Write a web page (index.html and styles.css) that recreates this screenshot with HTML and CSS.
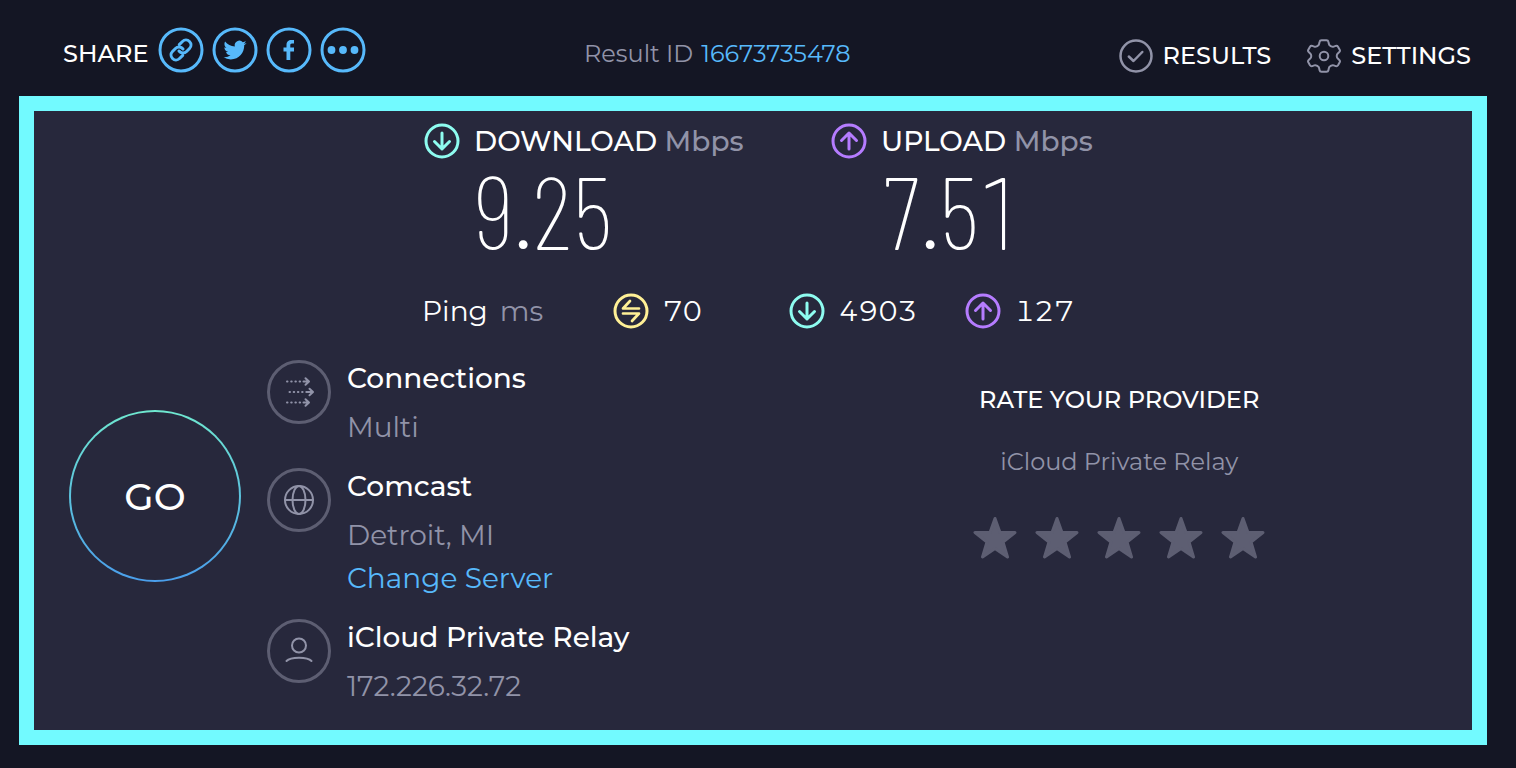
FILE: index.html
```html
<!DOCTYPE html>
<html lang="en">
<head>
<meta charset="utf-8">
<meta name="viewport" content="width=device-width, initial-scale=1">
<title>Speed test result</title>
<link rel="stylesheet" href="styles.css">
</head>
<body>
<svg class="sprite" aria-hidden="true">
  <symbol id="down" viewBox="0 0 36 36"><circle cx="18" cy="18" r="16"/><path d="M18 10v16M10.500 18.500 18 26l7.500-7.500"/></symbol>
  <symbol id="up" viewBox="0 0 36 36"><circle cx="18" cy="18" r="16"/><path d="M18 26V10M10.500 17.500 18 10l7.500 7.500"/></symbol>
  <symbol id="star" viewBox="0 0 44 44"><path d="M22 2.500 27 16.500H42L30 26 34.500 41 22 32.500 9.500 41 14 26 2 16.500H17Z"/></symbol>
</svg>
<header class="topbar">
  <div class="share">
    <span class="share-label">SHARE</span>
    <button class="share-button" aria-label="Copy link"><svg viewBox="0 0 46 46"><circle cx="23" cy="23" r="21"/><g transform="translate(11 11)"><path d="M10 13a5 5 0 0 0 7.540.540l3-3a5 5 0 0 0-7.070-7.070l-3.200 3.200"/><path d="M14 11a5 5 0 0 0-7.540-.540l-3 3a5 5 0 0 0 7.070 7.070l3.200-3.200"/></g></svg></button>
    <button class="share-button" aria-label="Share on Twitter"><svg viewBox="0 0 46 46"><circle cx="23" cy="23" r="21"/><path class="solid" transform="translate(11.500 11.500) scale(.96)" d="M23.950 4.570a10 10 0 0 1-2.820.770 4.960 4.960 0 0 0 2.160-2.720c-.950.550-2 .960-3.130 1.190a4.920 4.920 0 0 0-8.380 4.480C7.690 8.100 4.070 6.130 1.640 3.160a4.820 4.820 0 0 0-.670 2.480c0 1.710.870 3.210 2.190 4.100a4.900 4.900 0 0 1-2.230-.610v.060a4.920 4.920 0 0 0 3.950 4.830 5 5 0 0 1-2.210.080 4.940 4.940 0 0 0 4.600 3.420A9.870 9.870 0 0 1 0 19.540a14 14 0 0 0 7.550 2.210c9.050 0 14-7.500 14-13.980 0-.210 0-.420-.020-.630a9.940 9.940 0 0 0 2.460-2.550z"/></svg></button>
    <button class="share-button" aria-label="Share on Facebook"><svg viewBox="0 0 46 46"><circle cx="23" cy="23" r="21"/><path class="solid" d="M20.500 33V24.500H17.500V20.500H20.500V18c0-3.500 2-5 4.800-5H28v3.500h-2c-1.300 0-1.700.700-1.700 1.800v2.200H28V24.500H24.300V33Z"/></svg></button>
    <button class="share-button" aria-label="More ways to share"><svg viewBox="0 0 46 46"><circle cx="23" cy="23" r="21"/><g class="solid"><circle cx="11.500" cy="23" r="3.900"/><circle cx="23" cy="23" r="3.900"/><circle cx="34.500" cy="23" r="3.900"/></g></svg></button>
  </div>
  <div class="result-id">Result ID <a href="#result">16673735478</a></div>
  <nav class="nav">
    <a href="#results"><svg viewBox="0 0 34 34"><circle cx="17" cy="17" r="15.500"/><path stroke-width="2.500" d="m9.800 17.500 4.700 4.500 8.800-9"/></svg>RESULTS</a>
    <a href="#settings"><svg class="gear" viewBox="0 0 34 34"><path d="M14.500 1.200h5q1.600 0 1.900 1.600l.5 2.200q.3 1.300 1.500 1.900l.9.500q1.200.6 2.400.2l2-.7q1.500-.4 2.300.9l1.700 3q.7 1.300-.4 2.300l-1.500 1.400q-1 .9-1 2v1q0 1.200 1 2l1.500 1.400q1.100 1 .4 2.300l-1.700 3q-.8 1.300-2.300.9l-2-.7q-1.200-.4-2.400.2l-.9.500q-1.200.6-1.500 1.900l-.5 2.200q-.3 1.600-1.900 1.600h-5q-1.600 0-1.900-1.600l-.5-2.200q-.3-1.300-1.500-1.900l-.9-.5q-1.200-.6-2.400-.2l-2 .7q-1.500.4-2.300-.9l-1.700-3q-.7-1.300.4-2.300l1.500-1.400q1-.8 1-2v-1q0-1.100-1-2l-1.500-1.400q-1.100-1-.4-2.300l1.700-3q.8-1.300 2.300-.9l2 .7q1.200.4 2.400-.2l.9-.5q1.200-.6 1.500-1.900l.5-2.200q.3-1.600 1.900-1.600Z"/><circle cx="17" cy="17" r="4.300"/></svg>SETTINGS</a>
  </nav>
</header>
<main class="panel" id="result">
  <section class="speeds">
    <div class="speed">
      <svg class="ring teal"><use href="#down"/></svg>
      <h2>DOWNLOAD <span class="unit">Mbps</span></h2>
      <p class="speed-value">9.25</p>
    </div>
    <div class="speed">
      <svg class="ring purple"><use href="#up"/></svg>
      <h2>UPLOAD <span class="unit">Mbps</span></h2>
      <p class="speed-value">7.51</p>
    </div>
  </section>
  <section class="pings">
    <div class="ping-label">Ping <span class="muted">ms</span></div>
    <div class="ping"><svg class="ring yellow" viewBox="0 0 36 36"><circle cx="18" cy="18" r="16"/><path stroke-width="2.700" d="M26 15.500H10L17 8M10 20.500H26L19 28"/></svg>70</div>
    <div class="ping"><svg class="ring teal"><use href="#down"/></svg>4903</div>
    <div class="ping"><svg class="ring purple"><use href="#up"/></svg>127</div>
  </section>
  <section class="details">
    <button class="go">GO</button>
    <div class="hosts">
      <div class="host">
        <svg class="badge" viewBox="0 0 64 64"><circle class="outline" cx="32" cy="32" r="30.500"/><path stroke-dasharray=".5 3.700" d="M20 21.500H36M22.500 32H40M20 42.500H36"/><path d="M36.500 21.500h5M38.500 18.200l3.500 3.300-3.500 3.300M40.500 32h5M42.500 28.700l3.500 3.300-3.500 3.300M36.500 42.500h5M38.500 39.200l3.500 3.300-3.500 3.300"/></svg>
        <div><h3>Connections</h3><p>Multi</p></div>
      </div>
      <div class="host">
        <svg class="badge" viewBox="0 0 64 64"><circle class="outline" cx="32" cy="32" r="30.500"/><circle cx="32" cy="32" r="14"/><ellipse cx="32" cy="32" rx="6.500" ry="14"/><path d="M18 32H46"/></svg>
        <div><h3>Comcast</h3><p>Detroit, MI</p><a href="#servers">Change Server</a></div>
      </div>
      <div class="host">
        <svg class="badge" viewBox="0 0 64 64"><circle class="outline" cx="32" cy="32" r="30.500"/><circle cx="32" cy="26.500" r="7"/><path d="M19.500 42c4-4.500 21-4.500 25 0"/></svg>
        <div><h3>iCloud Private Relay</h3><p>172.226.32.72</p></div>
      </div>
    </div>
    <div class="rate">
      <h4>RATE YOUR PROVIDER</h4>
      <p>iCloud Private Relay</p>
      <div class="stars">
        <button aria-label="1 star"><svg><use href="#star"/></svg></button>
        <button aria-label="2 stars"><svg><use href="#star"/></svg></button>
        <button aria-label="3 stars"><svg><use href="#star"/></svg></button>
        <button aria-label="4 stars"><svg><use href="#star"/></svg></button>
        <button aria-label="5 stars"><svg><use href="#star"/></svg></button>
      </div>
    </div>
  </section>
</main>
</body>
</html>
```
FILE: styles.css
```css
* { box-sizing: border-box; }
body {
  margin: 0;
  min-height: 100vh;
  background: #141624;
  color: #fff;
  font-family: Montserrat, Inter, sans-serif;
  font-size: 28px;
  font-weight: 400;
}
h2, h3, h4, p { margin: 0; }
a { color: #57b9fb; text-decoration: none; }
button { border: 0; padding: 0; background: none; color: inherit; font: inherit; cursor: pointer; }
svg { display: block; flex: none; fill: none; stroke: currentColor; stroke-width: 3; stroke-linecap: round; stroke-linejoin: round; }
.solid { fill: currentColor; stroke: none; }
.sprite { position: absolute; width: 0; height: 0; }
.muted { color: #9193a8; }

.topbar {
  display: grid;
  grid-template-columns: 37% 1fr auto;
  align-items: center;
  height: 96px;
  padding: 4px 45px 0 63px;
  font-size: 24px;
}
.share { display: flex; align-items: center; gap: 8px; }
.share-label { margin: 6px 1px 0 0; font-weight: 500; }
.share-button { color: #57b9fb; }
.share-button svg { width: 46px; height: 46px; }
.result-id { color: #9193a8; padding-top: 6px; }
.result-id a { margin-left: 2px; }
.nav { display: flex; gap: 36px; padding-top: 11px; }
.nav a { display: flex; align-items: center; gap: 10px; color: #fff; font-weight: 500; }
.nav svg { width: 34px; height: 34px; color: #9193a8; stroke-width: 2.5; }
.nav .gear { stroke-width: 2; }

.panel {
  margin: 0 29px 23px 19px;
  border: 15px solid #72faff;
  padding: 12px 35px 22px;
  background: #27283c;
}
.speeds {
  display: grid;
  grid-template-columns: 407px 262px;
  justify-content: center;
  padding-left: 11px;
}
.speed { display: grid; grid-template-columns: 36px auto; column-gap: 14px; justify-content: start; align-items: center; }
.speed h2 { font-size: 28px; line-height: 36px; font-weight: 500; white-space: nowrap; }
.unit { color: #9193a8; }
.speed-value {
  grid-column: 2;
  margin-bottom: 6px;
  font-family: "Barlow Condensed", "Roboto Condensed", Lato, sans-serif;
  font-size: 102px;
  font-weight: 200;
  line-height: 100px;
  font-variant-numeric: tabular-nums;
}
.ring { width: 36px; height: 36px; }
.teal { color: #8efcf0; }
.purple { color: #b57cff; }
.yellow { color: #fff096; }
.pings {
  display: grid;
  grid-template-columns: 191px 176px 176px 125px;
  justify-content: center;
  align-items: center;
  margin-top: 28px;
  padding-left: 6px;
  line-height: 36px;
}
.ping { display: flex; align-items: center; gap: 14px; font-variant-numeric: tabular-nums; }
.ping-label { display: flex; gap: 12px; }

.details {
  display: grid;
  grid-template-columns: 172px 4fr 5fr;
  column-gap: 26px;
  align-items: start;
  margin-top: 31px;
}
.go {
  width: 172px;
  height: 172px;
  margin-top: 50px;
  border: 2px solid transparent;
  border-radius: 50%;
  background: linear-gradient(#27283c, #27283c) padding-box, linear-gradient(#6fe8d0, #4a9eeb) border-box;
  font-size: 38px;
  font-weight: 500;
}
.hosts { display: grid; gap: 19px; }
.host { display: grid; grid-template-columns: 64px auto; column-gap: 16px; justify-content: start; align-items: start; line-height: 43px; }
.host h3 { margin-bottom: 10px; font-size: 28px; line-height: 36px; font-weight: 500; }
.host p { color: #9193a8; }
.badge { width: 64px; height: 64px; color: #9193a8; stroke-width: 2; }
.outline { stroke: #5d5e72; stroke-width: 3; }
.rate { padding-top: 24px; text-align: center; font-size: 24px; line-height: 32px; }
.rate h4 { font-size: 24px; font-weight: 500; }
.rate p { margin-top: 30px; color: #9193a8; }
.stars { display: flex; justify-content: center; gap: 18px; margin-top: 38px; }
.stars button { color: #5d5e72; }
.stars svg { width: 44px; height: 44px; fill: currentColor; }
```
